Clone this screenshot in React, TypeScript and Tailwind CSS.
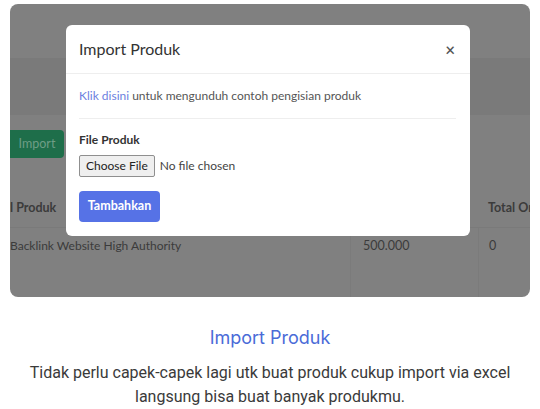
export default function App() {
  return (
    <div className="w-[540px] h-[409px] bg-white overflow-hidden" style={{ fontFamily: 'Lato, sans-serif' }}>
      <div className="pt-[4px] px-[10px]">
        <div className="relative h-[293px] rounded-[8px] bg-[#808080] overflow-hidden text-[#3b3b3b]">
          {/* background page (dimmed) */}
          <div className="h-[54px]" />
          <div className="h-[57px] bg-[#7a7a7a]" />
          <div className="h-[15px]" />
          <div className="flex">
            <div className="w-[54px] h-[28px] bg-[#1e6e4a] rounded-r-[4px] flex items-center justify-center text-[12.5px] text-[#6e9d86]">Import</div>
          </div>
          <div className="h-[31px]" />
          <div className="grid grid-cols-[340px_128px_1fr] border-b border-[#7a7a7a]">
            <div className="h-[38px] flex items-center text-[12.5px] font-bold">l Produk</div>
            <div className="h-[38px]" />
            <div className="h-[38px] flex items-center pl-[10px] text-[12.5px] font-bold whitespace-nowrap">Total Or</div>
          </div>
          <div className="grid grid-cols-[340px_128px_1fr] h-[80px]">
            <div className="pt-[9px] text-[12px] leading-[18px]">Backlink Website High Authority</div>
            <div className="pt-[9px] pl-[12px] text-[12.5px] leading-[18px] border-l border-[#7b7b7b]">500.000</div>
            <div className="pt-[9px] pl-[10px] text-[12.5px] leading-[18px] border-l border-[#7b7b7b]">0</div>
          </div>

          {/* modal */}
          <div className="absolute left-[56px] top-[21px] w-[404px] h-[211px] bg-white rounded-[6px] flex flex-col">
            <div className="h-[49px] flex items-center justify-between pl-[13px] pr-[15px] border-b border-[#eeeeee]">
              <span className="text-[16px] text-[#333]">Import Produk</span>
              <span className="text-[17px] text-[#555] font-semibold leading-none">×</span>
            </div>
            <div className="px-[13px]">
              <div className="h-[45px] flex items-center text-[12px] text-[#555] border-b border-[#eeeeee] w-[377px]">
                <span className="text-[#6c7fe0]">Klik disini</span>
                <span>&nbsp;untuk mengunduh contoh pengisian produk</span>
              </div>
              <div className="mt-[13px] text-[12px] font-bold text-[#333] leading-[16px]">File Produk</div>
              <div className="mt-[7px] flex items-center gap-[5px]">
                <span className="h-[22px] px-[6px] flex items-center border border-[#8f8f8f] bg-[#efefef] rounded-[2px] text-[12px] text-[#222]">Choose File</span>
                <span className="text-[12px] text-[#444]">No file chosen</span>
              </div>
              <div className="mt-[14px] w-[81px] h-[31px] rounded-[4px] bg-[#5672e6] flex items-center justify-center text-[12.5px] font-bold text-white">Tambahkan</div>
            </div>
          </div>
        </div>
      </div>
      <div className="mt-[29px] text-center text-[18px] leading-[24px] text-[#4a6bd8]" style={{ fontFamily: 'Inter, sans-serif' }}>Import Produk</div>
      <div className="mt-[11px] text-center text-[16px] leading-[24px] text-[#3a3a3a]" style={{ fontFamily: 'Roboto, sans-serif' }}>
        Tidak perlu capek-capek lagi utk buat produk cukup import via excel<br />langsung bisa buat banyak produkmu.
      </div>
    </div>
  );
}
